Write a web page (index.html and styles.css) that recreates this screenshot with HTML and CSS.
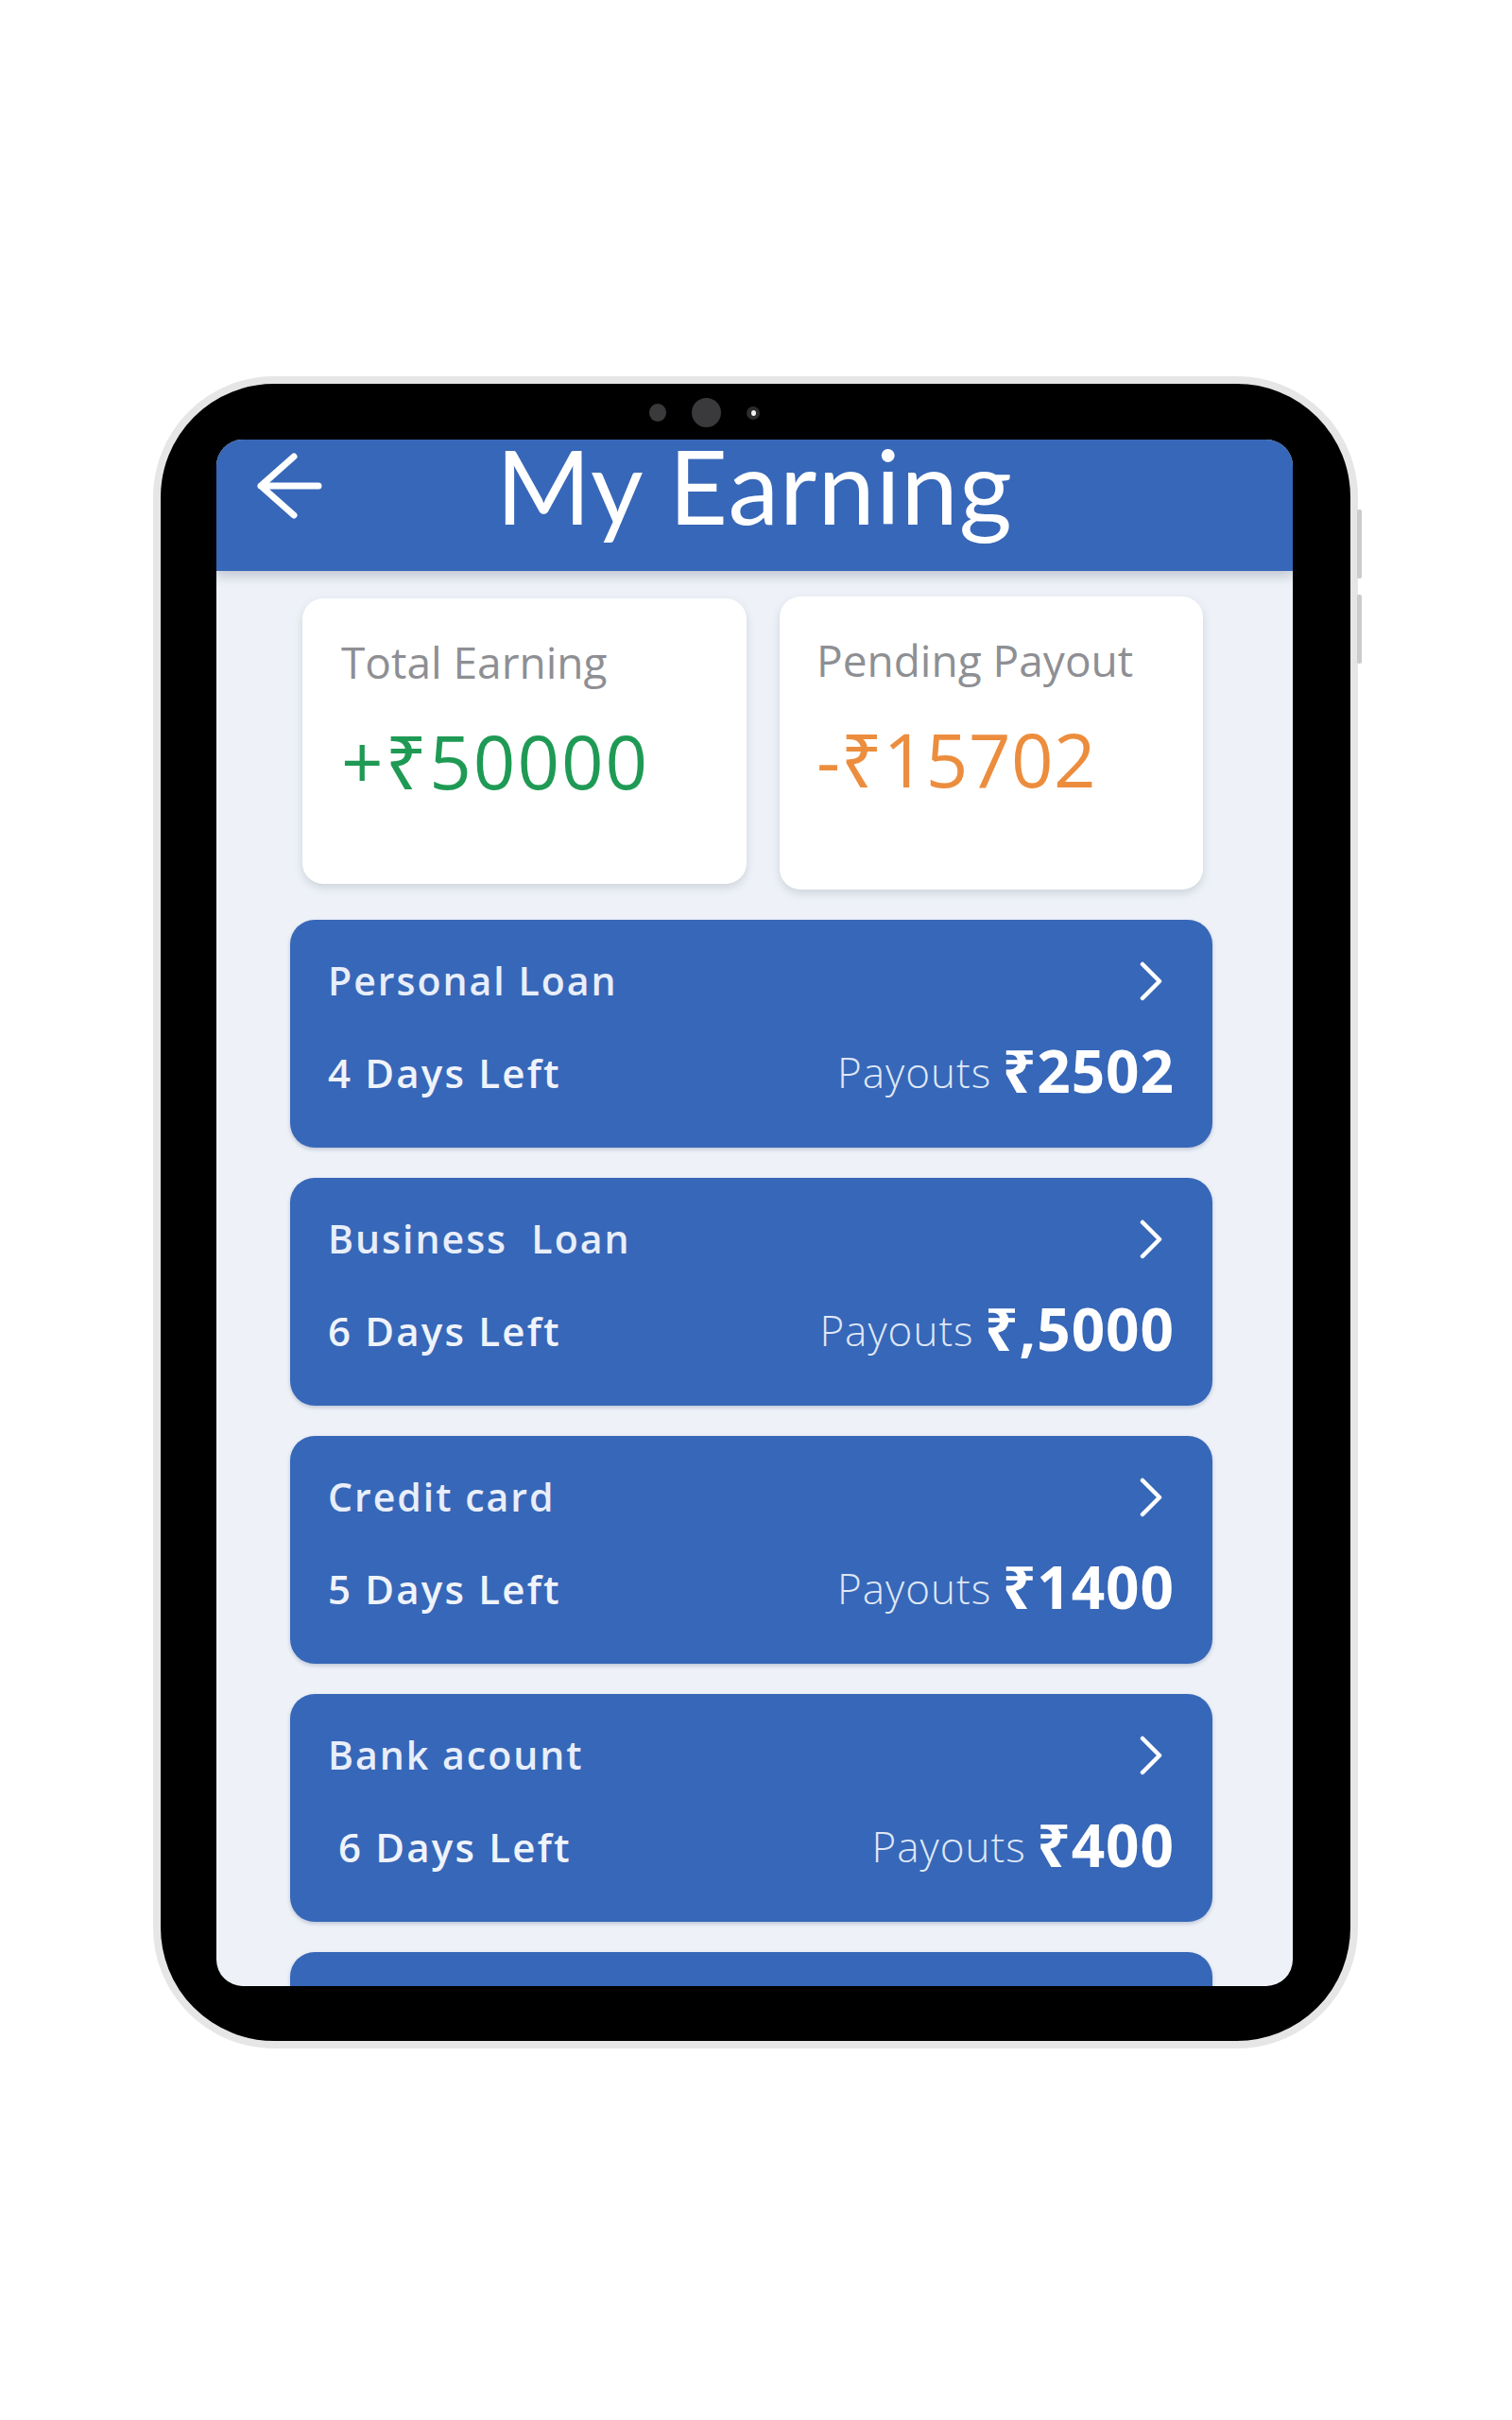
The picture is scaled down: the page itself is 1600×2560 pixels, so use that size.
FILE: index.html
```html
<!DOCTYPE html>
<html lang="en">
<head>
<meta charset="utf-8">
<title>My Earning</title>
<link rel="stylesheet" href="styles.css">
</head>
<body>
<div class="device">
  <span class="btn-top"></span>
  <span class="btn-side btn-side-1"></span>
  <span class="btn-side btn-side-2"></span>
  <div class="camera">
    <span class="dot dot-sm"></span>
    <span class="dot dot-lg"></span>
    <span class="dot dot-lens"><span class="glint"></span></span>
  </div>
  <div class="screen">
    <header class="appbar">
      <svg class="back" viewBox="0 0 70 70" width="70" height="70" aria-hidden="true">
        <path d="M5 35 H66 M40 4 L5 35 L40 66" fill="none" stroke="#ffffff" stroke-width="7" stroke-linecap="round" stroke-linejoin="round"/>
      </svg>
      <h1 class="title">My Earning</h1>
      <span class="spacer"></span>
    </header>
    <main class="content">
      <section class="summary">
        <div class="stat stat-earn">
          <div class="stat-label">Total Earning</div>
          <div class="stat-value green">+₹50000</div>
        </div>
        <div class="stat stat-pend">
          <div class="stat-label">Pending Payout</div>
          <div class="stat-value orange">-₹15702</div>
        </div>
      </section>
      <ul class="loans">
        <li class="loan">
          <div class="loan-head">
            <span class="loan-name">Personal Loan</span>
            <svg class="chev" viewBox="0 0 26 42" width="26" height="42" aria-hidden="true"><path d="M4 3 L22 21 L4 39" fill="none" stroke="#ffffff" stroke-width="4.5" stroke-linecap="round" stroke-linejoin="round"/></svg>
          </div>
          <div class="loan-foot">
            <span class="days">4 Days Left</span>
            <span class="payout"><span class="payout-label">Payouts</span> <span class="payout-amt">₹2502</span></span>
          </div>
        </li>
        <li class="loan">
          <div class="loan-head">
            <span class="loan-name">Business&nbsp; Loan</span>
            <svg class="chev" viewBox="0 0 26 42" width="26" height="42" aria-hidden="true"><path d="M4 3 L22 21 L4 39" fill="none" stroke="#ffffff" stroke-width="4.5" stroke-linecap="round" stroke-linejoin="round"/></svg>
          </div>
          <div class="loan-foot">
            <span class="days">6 Days Left</span>
            <span class="payout"><span class="payout-label">Payouts</span> <span class="payout-amt">₹,5000</span></span>
          </div>
        </li>
        <li class="loan">
          <div class="loan-head">
            <span class="loan-name">Credit card</span>
            <svg class="chev" viewBox="0 0 26 42" width="26" height="42" aria-hidden="true"><path d="M4 3 L22 21 L4 39" fill="none" stroke="#ffffff" stroke-width="4.5" stroke-linecap="round" stroke-linejoin="round"/></svg>
          </div>
          <div class="loan-foot">
            <span class="days">5 Days Left</span>
            <span class="payout"><span class="payout-label">Payouts</span> <span class="payout-amt">₹1400</span></span>
          </div>
        </li>
        <li class="loan">
          <div class="loan-head">
            <span class="loan-name">Bank acount</span>
            <svg class="chev" viewBox="0 0 26 42" width="26" height="42" aria-hidden="true"><path d="M4 3 L22 21 L4 39" fill="none" stroke="#ffffff" stroke-width="4.5" stroke-linecap="round" stroke-linejoin="round"/></svg>
          </div>
          <div class="loan-foot">
            <span class="days days-indent">6 Days Left</span>
            <span class="payout"><span class="payout-label">Payouts</span> <span class="payout-amt">₹400</span></span>
          </div>
        </li>
        <li class="loan"></li>
      </ul>
    </main>
  </div>
</div>
</body>
</html>
```
FILE: styles.css
```css
* { box-sizing: border-box; }

html, body {
  margin: 0;
  padding: 0;
  background: #ffffff;
}

body {
  width: 1600px;
  height: 2560px;
  overflow: hidden;
  font-family: "Open Sans", "Noto Sans", "DejaVu Sans", sans-serif;
}

.device {
  position: relative;
  margin: 398px 0 0 162px;
  width: 1275px;
  height: 1769px;
  border: 8px solid #e6e6e6;
  border-radius: 128px;
  background: #000000;
  padding: 59px 61px 58px 59px;
}

.btn-top {
  position: absolute;
  z-index: -1;
  top: -14px;
  left: 1087px;
  width: 87px;
  height: 10px;
  border-radius: 3px;
  background: #c9c9c9;
}

.btn-side {
  position: absolute;
  right: -12px;
  width: 5px;
  height: 73px;
  border-radius: 2px;
  background: #cbcbcb;
}
.btn-side-1 { top: 133px; }
.btn-side-2 { top: 223px; }

.camera {
  position: absolute;
  left: 517px;
  top: 15px;
  height: 31px;
  display: flex;
  align-items: center;
  gap: 27px;
}

.dot {
  display: block;
  border-radius: 50%;
  background: #3a3a3c;
}
.dot-sm { width: 18px; height: 19px; }
.dot-lg { width: 31px; height: 31px; }
.dot-lens {
  width: 14px;
  height: 14px;
  background: #2c2c2e;
  display: flex;
  align-items: center;
  justify-content: center;
}
.glint {
  width: 5px;
  height: 6px;
  border-radius: 50%;
  background: #f2f2f2;
}

.screen {
  width: 100%;
  height: 100%;
  border-radius: 28px;
  background: #eef2f8;
  display: flex;
  flex-direction: column;
}

.appbar {
  position: relative;
  z-index: 1;
  flex: 0 0 139px;
  border-radius: 28px 28px 0 0;
  background: #3767b8;
  display: grid;
  grid-template-columns: 1fr auto 1fr;
  align-items: start;
  box-shadow: 0 6px 12px rgba(40, 50, 80, 0.22);
}

.back {
  display: block;
  margin: 14px 0 0 42px;
}

.title {
  margin: 0;
  font-family: "Lato", "Open Sans", sans-serif;
  font-weight: 400;
  font-size: 108px;
  line-height: 96px;
  letter-spacing: 1px;
  color: #ffffff;
  white-space: nowrap;
}

.content {
  flex: 1 1 auto;
  min-height: 0;
  overflow: hidden;
  border-radius: 0 0 28px 28px;
  padding: 27px 85px 0 78px;
}

.summary {
  display: grid;
  grid-template-columns: 470px 448px;
  column-gap: 35px;
  margin-left: 13px;
  align-items: start;
}

.stat {
  background: #ffffff;
  border-radius: 22px;
  box-shadow: 0 4px 10px rgba(60, 70, 90, 0.18);
  padding: 40px 0 0 41px;
}
.stat-earn { height: 302px; margin-top: 2px; }
.stat-pend { height: 310px; padding-left: 39px; }

.stat-label {
  font-size: 46px;
  line-height: 55px;
  font-weight: 400;
  color: #8e8f94;
  white-space: nowrap;
}

.stat-value {
  margin-top: 30px;
  font-size: 78px;
  line-height: 94px;
  font-weight: 400;
  letter-spacing: 2px;
  white-space: nowrap;
}
.green { color: #1f9a55; }
.orange { color: #ec8d3e; letter-spacing: 0.5px; }

.loans {
  list-style: none;
  margin: 32px 0 0 0;
  padding: 0;
}

.loan {
  height: 241px;
  border-radius: 26px;
  background: #3767b8;
  padding: 40px 40px 0 40px;
  color: #eef2fb;
  box-shadow: 0 2px 4px rgba(40, 60, 110, 0.25);
}
.loan + .loan { margin-top: 32px; }

.loan-head {
  height: 49px;
  display: flex;
  justify-content: space-between;
  align-items: center;
}

.loan-name {
  font-size: 41px;
  line-height: 49px;
  font-weight: 600;
  letter-spacing: 2px;
  color: #e8eefa;
  white-space: pre;
}

.chev {
  display: block;
  margin-right: 12px;
}

.loan-foot {
  margin-top: 34px;
  display: flex;
  justify-content: space-between;
  align-items: baseline;
}

.days {
  font-size: 42px;
  line-height: 50px;
  font-weight: 600;
  letter-spacing: 2.2px;
  color: #eff3fb;
}
.days-indent { padding-left: 11px; }

.payout {
  font-size: 44px;
  line-height: 72px;
  white-space: nowrap;
}

.payout-label {
  font-weight: 300;
  letter-spacing: 1px;
  color: #dfe7f7;
}

.payout-amt {
  font-size: 62px;
  font-weight: 700;
  color: #ffffff;
  letter-spacing: 1px;
  vertical-align: -5px;
}
```
